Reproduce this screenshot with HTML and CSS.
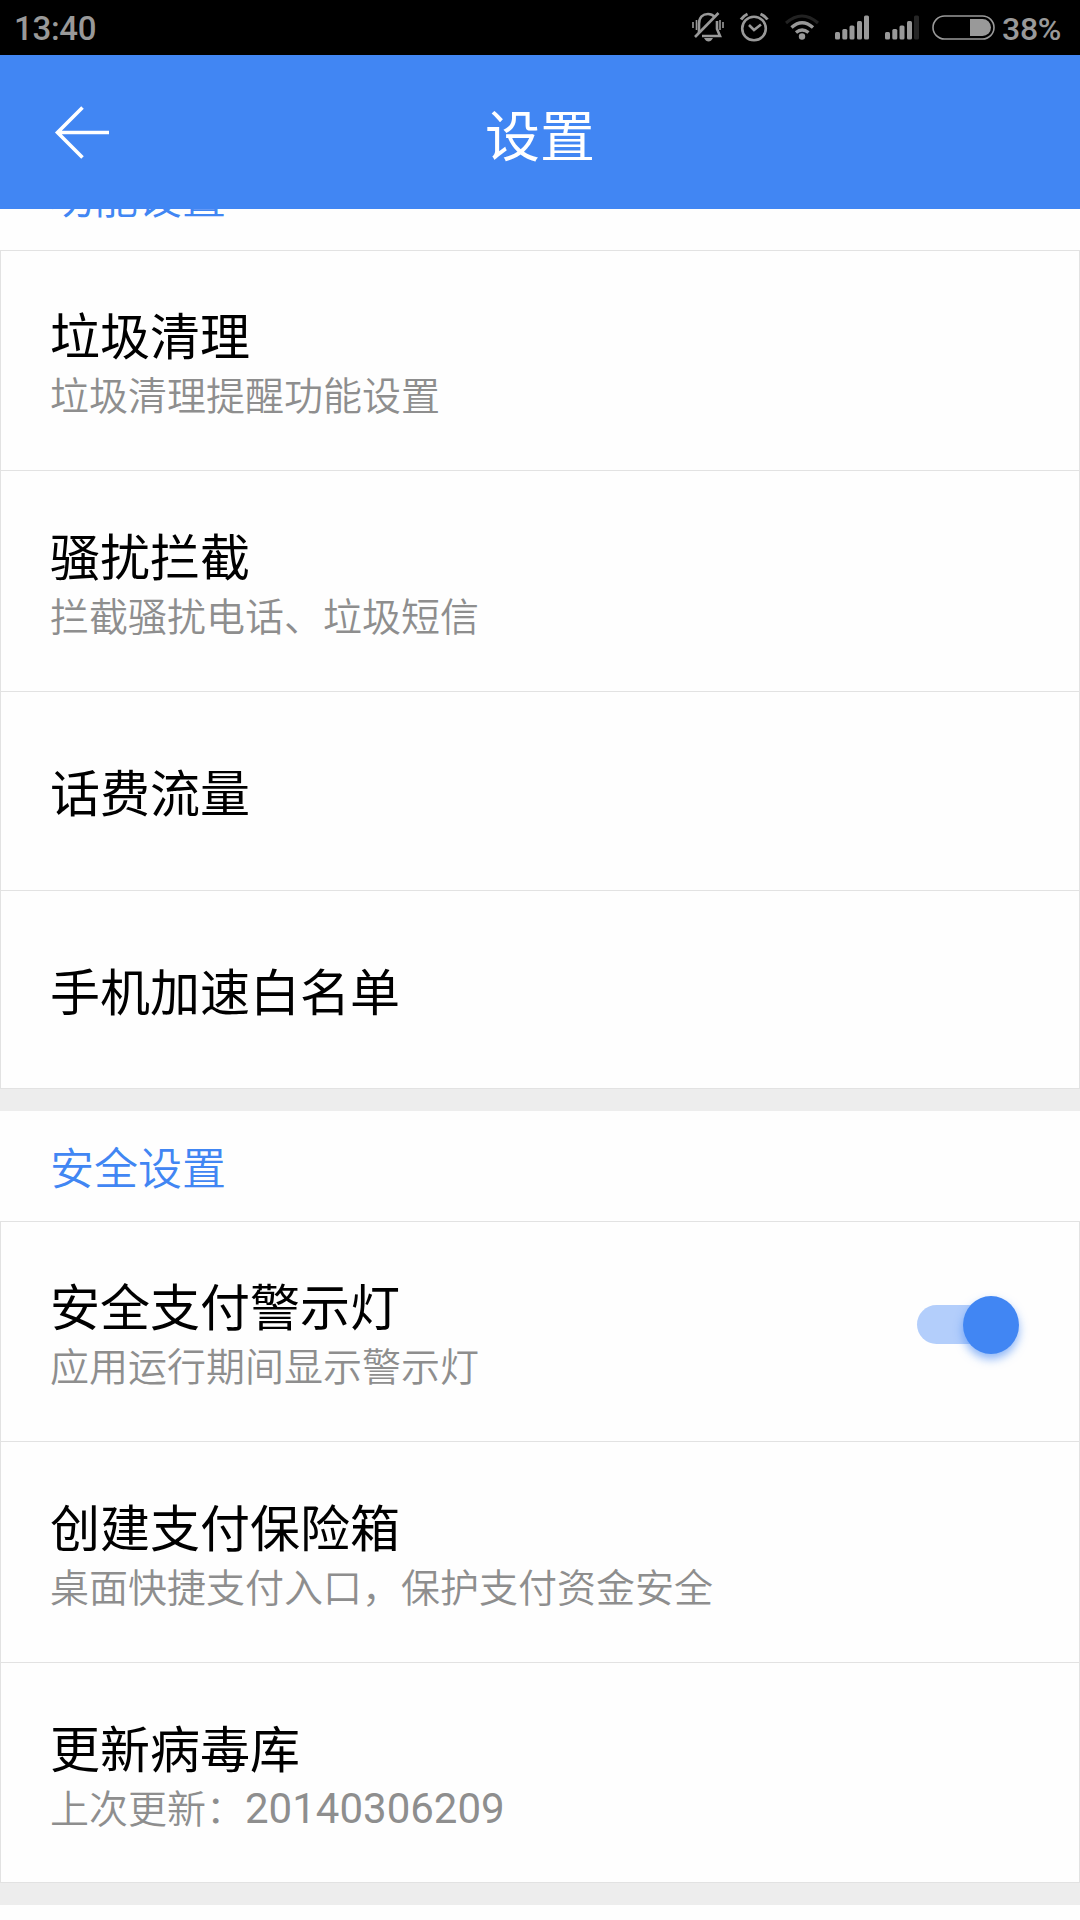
FILE: index.html
```html
<!DOCTYPE html>
<html lang="zh-CN">
<head>
  <meta charset="UTF-8" />
  <meta name="viewport" content="width=device-width, initial-scale=1.0"/>
  <title>设置</title>
  <link rel="stylesheet" href="styles.css">
</head>
<body>
  <div class="status-bar">
    <span class="time">13:40</span>
    <!-- silent, alarm, wifi, sim 1, sim 2, battery -->
    <svg class="status-icons" width="316" height="55" viewBox="684 0 316 55">
      <g fill="none" stroke="#999" stroke-width="2.6">
        <path d="M699 33V24C699 17 703 14 708 14C711 14 713 15 715 17M717 21V29L720 36H702"/>
        <path d="M718.500 13L695 37"/>
        <path d="M693 22V28M696.500 20V30M720 20V30M723 22V28" stroke-width="1.6"/>
        <circle cx="754" cy="28.500" r="11.800"/>
        <path d="M749 25L754 30L761 24.500"/>
        <path d="M741 19.500Q743 16 747.500 14M760.500 14Q765 16 767.500 19.500" stroke-width="3"/>
        <path d="M786 23Q802 9 818 23" stroke="#222" stroke-width="3"/>
        <path d="M791.500 27.500Q802 18 813 27.500M796 32.500Q802 27.500 808.500 32.500" stroke-width="3.4"/>
        <rect x="933" y="16" width="61" height="23" rx="11.500" stroke-width="1.6"/>
      </g>
      <g fill="#999">
        <path d="M704 38H713Q711 41.500 708.500 41.500Q706 41.500 704 38Z"/>
        <circle cx="802" cy="36.500" r="3.200"/>
        <rect x="835" y="32" width="5" height="7.500" rx="1.500"/>
        <rect x="842.300" y="29" width="5" height="10.500" rx="1.500"/>
        <rect x="849.500" y="25.500" width="5" height="14" rx="1.500"/>
        <rect x="857" y="21" width="5" height="18.500" rx="1.500"/>
        <rect x="864" y="15.500" width="5" height="24" rx="1.500"/>
        <rect x="885" y="32" width="5" height="7.500" rx="1.500"/>
        <rect x="892.300" y="29" width="5" height="10.500" rx="1.500"/>
        <rect x="899.500" y="25.500" width="5" height="14" rx="1.500"/>
        <rect x="907" y="21" width="5" height="18.500" rx="1.500"/>
        <rect x="914" y="15.500" width="5" height="24" rx="1.500" fill="#262626"/>
        <path d="M970 19H982.500A8.500 8.500 0 0 1 982.500 36H970Z"/>
      </g>
    </svg>
    <span class="battery">38%</span>
  </div>

  <header class="title-bar">
    <svg class="back" width="56" height="54" viewBox="0 0 56 54" fill="none" stroke="#fff" stroke-width="3.6">
      <path d="M55 27.500H4M28.500 2.500L3.500 27.500L28.500 52.500"/>
    </svg>
    <h1>设置</h1>
  </header>

  <main class="settings">
    <section class="group">
      <h2>功能设置</h2>
      <ul class="list">
        <li class="item">
          <div class="name">垃圾清理</div>
          <div class="desc">垃圾清理提醒功能设置</div>
        </li>
        <li class="item">
          <div class="name">骚扰拦截</div>
          <div class="desc">拦截骚扰电话、垃圾短信</div>
        </li>
        <li class="item single">
          <div class="name">话费流量</div>
        </li>
        <li class="item single">
          <div class="name">手机加速白名单</div>
        </li>
      </ul>
    </section>

    <section class="group">
      <h2>安全设置</h2>
      <ul class="list">
        <li class="item with-switch">
          <div>
            <div class="name">安全支付警示灯</div>
            <div class="desc">应用运行期间显示警示灯</div>
          </div>
          <div class="switch"><div class="knob"></div></div>
        </li>
        <li class="item">
          <div class="name">创建支付保险箱</div>
          <div class="desc">桌面快捷支付入口，保护支付资金安全</div>
        </li>
        <li class="item">
          <div class="name">更新病毒库</div>
          <div class="desc">上次更新：<span class="num">20140306209</span></div>
        </li>
      </ul>
    </section>
  </main>
</body>
</html>
```

FILE: styles.css
```css
* {
  box-sizing: border-box;
}

body {
  margin: 0;
  height: 1920px;
  overflow: hidden;
  display: flex;
  flex-direction: column;
  background: #fefefe;
  font-family: "Noto Sans CJK SC", sans-serif;
  font-weight: 350;
}

h1, h2, ul {
  margin: 0;
  padding: 0;
  font-weight: 350;
}

.status-bar {
  flex: none;
  height: 55px;
  display: flex;
  align-items: center;
  padding: 0 16px 0 14px;
  background: #000;
  color: #999;
  font-family: Roboto, sans-serif;
  font-weight: 500;
  font-size: 33px;
}

.time {
  padding-top: 2px;
  letter-spacing: -0.3px;
}

.status-icons {
  margin-left: auto;
}

.battery {
  width: 62px;
  margin-left: 2px;
  padding-top: 2px;
  font-size: 32px;
  letter-spacing: -0.3px;
}

.title-bar {
  flex: none;
  height: 154px;
  display: grid;
  grid-template-columns: 1fr auto 1fr;
  align-items: center;
  padding: 0 54px;
  background: #4186f3;
  color: #fff;
}

.title-bar h1 {
  font-size: 55px;
  line-height: 55px;
  font-weight: 400;
}

.settings {
  flex: 1;
  min-height: 0;
  overflow: hidden;
}

.group {
  border-bottom: 22px solid #ededed;
}

/* list is scrolled part way under the title bar */
.group:first-child {
  margin-top: -69px;
}

.group h2 {
  height: 110px;
  padding: 0 50px;
  line-height: 110px;
  font-size: 44px;
  color: #4186f3;
}

.list {
  list-style: none;
  border: 1px solid #e2e2e2;
}

.item {
  height: 219px;
  padding: 57px 49px 0;
}

.item + .item {
  height: 221px;
  padding-top: 58px;
  border-top: 1px solid #e2e2e2;
}

.item + .item:last-child {
  height: 220px;
}

.item + .item.single {
  height: 199px;
  padding-top: 73px;
}

.item + .item.single:last-child {
  height: 198px;
}

.name {
  font-size: 50px;
  line-height: 50px;
  font-weight: 400;
  color: #000;
}

.desc {
  margin-top: 16px;
  font-size: 39px;
  line-height: 39px;
  color: #8e8e8e;
}

.num {
  font-family: Roboto, sans-serif;
  font-weight: 400;
  font-size: 42px;
}

.with-switch {
  display: flex;
  justify-content: space-between;
}

.switch {
  width: 102px;
  height: 39px;
  margin: 26px 11px 0 0;
  display: flex;
  align-items: center;
  justify-content: flex-end;
  border-radius: 20px;
  background: linear-gradient(to right, #b3cefb 80px, transparent 80px);
}

.knob {
  flex: none;
  width: 56px;
  height: 58px;
  border-radius: 50%;
  background: #4186f3;
  box-shadow: 0 5px 10px rgba(65, 134, 243, 0.6);
}
```
